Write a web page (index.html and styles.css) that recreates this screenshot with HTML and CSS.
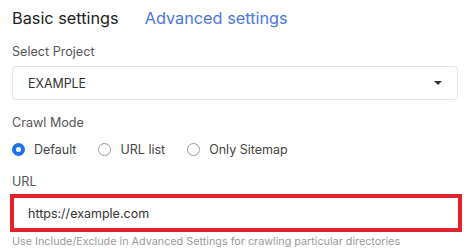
FILE: index.html
```html
<!DOCTYPE html>
<html>
<head>
<meta charset="utf-8">
<link rel="stylesheet" href="styles.css">
</head>
<body>
<div class="page">
  <div class="tabs">
    <span class="tab active">Basic settings</span>
    <span class="tab link">Advanced settings</span>
  </div>
  <div class="label l-project">Select Project</div>
  <div class="select">
    <span>EXAMPLE</span>
    <span class="caret"></span>
  </div>
  <div class="label l-mode">Crawl Mode</div>
  <div class="radios">
    <label class="radio"><span class="dot on"></span>Default</label>
    <label class="radio"><span class="dot"></span>URL list</label>
    <label class="radio"><span class="dot"></span>Only Sitemap</label>
  </div>
  <div class="label l-url">URL</div>
  <div class="input">https://example.com</div>
  <div class="help">Use Include/Exclude in Advanced Settings for crawling particular directories</div>
</div>
</body>
</html>
```
FILE: styles.css
```css
* { box-sizing: border-box; }
html, body { margin: 0; padding: 0; background: #fff; }
body { font-family: Inter, "Noto Sans", sans-serif; color: #333; width: 469px; height: 250px; overflow: hidden; }
.page { padding: 8px 11px 0 12px; display: flex; flex-direction: column; }
.tabs { display: flex; gap: 26px; font-size: 16.3px; line-height: 20px; }
.tab.active { color: #222; }
.tab.link { color: #4a77df; }
.label { font-size: 12.6px; line-height: 16px; color: #555; }
.l-project { margin-top: 16px; }
.select { margin-top: 6px; height: 34px; border: 1px solid #e3e3e3; border-radius: 4px; display: flex; align-items: center; justify-content: space-between; padding: 0 15px 0 15px; font-size: 12.4px; color: #333; }
.caret { width: 0; height: 0; border-left: 4px solid transparent; border-right: 4px solid transparent; border-top: 4px solid #333; }
.l-mode { margin-top: 15px; }
.radios { margin-top: 8px; height: 20px; display: flex; align-items: center; gap: 22px; font-size: 12.5px; color: #444; }
.radio { display: flex; align-items: center; gap: 9px; }
.dot { width: 13px; height: 13px; border-radius: 50%; border: 1px solid #9a9a9a; display: inline-block; }
.dot.on { border: 4px solid #1a73e8; background: #fff; }
.l-url { margin-top: 15px; }
.input { margin-top: 4px; margin-left: -2px; width: 452px; height: 38px; border: 4px solid #e1232b; display: flex; align-items: center; padding-left: 14px; font-size: 12.5px; color: #333; }
.help { margin-top: 3px; font-size: 10.8px; line-height: 14px; color: #9a9a9a; white-space: nowrap; }
```
